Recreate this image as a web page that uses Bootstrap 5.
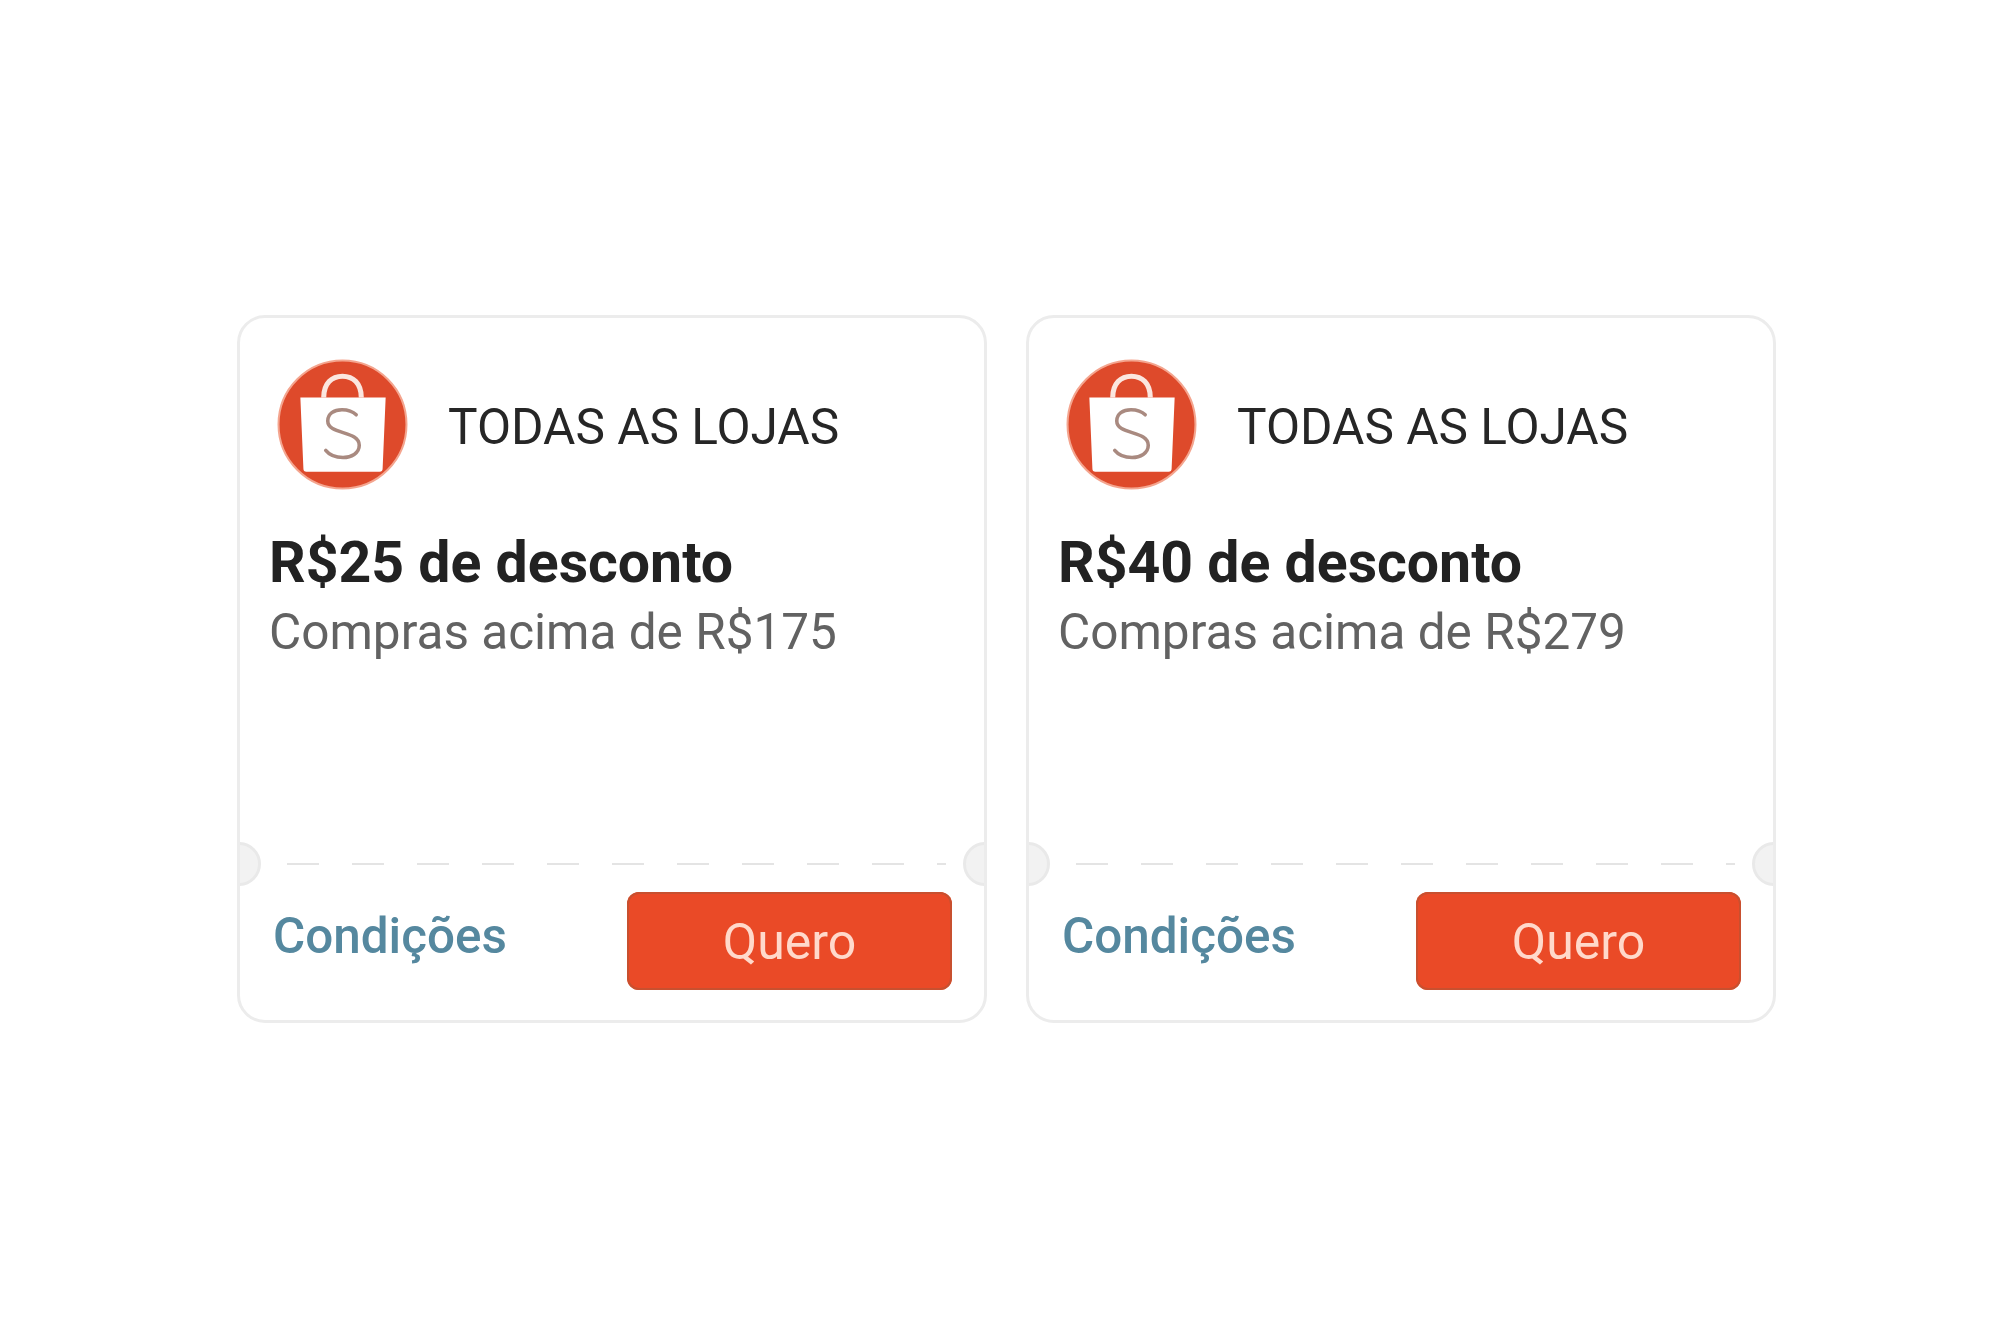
<!DOCTYPE html>
<html lang="pt-BR">
<head>
<meta charset="utf-8">
<title>Cupons</title>
<link href="https://cdn.jsdelivr.net/npm/bootstrap@5.3.0/dist/css/bootstrap.min.css" rel="stylesheet">
<style>
html,body{background:#fff;}
body{font-family:Roboto,"Liberation Sans",sans-serif;width:2000px;height:1324px;overflow:hidden;}
.stage{padding:315px 0 0 237px;gap:39px;}
.coupon{position:relative;width:750px;height:708px;background:#fff;border:3px solid #ececec;border-radius:28px;--bs-card-border-color:#ececec;overflow:hidden;}
.coupon-top{padding:41px 0 0 29px;height:545px;flex:none;}
.store{gap:40px;padding-left:8px;height:131px;}
.store-logo{width:131px;height:131px;flex:none;display:block;filter:blur(.6px);}
.store-name{font-size:49.600px;line-height:1;color:#262626;font-weight:400;margin-top:7px;}
.deal{font-size:57.200px;font-weight:700;color:#222;line-height:64px;margin:41px 0 0;}
.minbuy{font-size:49.500px;color:#626262;line-height:60px;margin:7px 0 0;}
.tear{height:2px;margin:0 38px 0 47px;background:repeating-linear-gradient(90deg,#e4e4e4 0 32px,transparent 32px 65px);}
.notch{position:absolute;width:44px;height:44px;border-radius:50%;background:#f2f2f2;border:3px solid #e9e9e9;top:524px;}
.notch-l{left:-23px;}
.notch-r{right:-23px;}
.coupon-foot{padding:27px 32px 0 33px;}
.terms{font-size:49.400px;font-weight:500;color:#55889f;text-decoration:none;line-height:60px;margin-top:-10px;}
.want{width:325px;height:98px;background:#ea4a27;border:0;border-radius:12px;box-shadow:inset 0 0 0 2px #c8502f;color:#ffd9cb;font-size:50px;line-height:1;padding:2px 0 0;}
.want:hover{background:#ea4a27;color:#ffd9cb;}
</style>
</head>
<body>
<svg width="0" height="0" class="d-block" aria-hidden="true"><defs>
<symbol id="shop" viewBox="0 0 129 129">
<circle cx="64.5" cy="64.5" r="63" fill="#de4a2b" stroke="#f4a58f" stroke-width="2"/>
<path d="M46 38C46 24 54 17 64.500 17S83 24 83 38" fill="none" stroke="#fbe6df" stroke-width="5"/>
<path d="M23 38H107L104 108Q104 111 101 111H29Q26 111 26 108Z" fill="#fff"/>
<path d="M78 55C74 51 69 50 64 50C56 50 50 54 50 61C50 75 81 70 81 85C81 93 73 97 65 97C58 97 52 95 48 90" fill="none" stroke="#a98a80" stroke-width="3.500" stroke-linecap="round"/>
</symbol></defs></svg>
<main class="stage d-flex">
  <div class="card coupon">
    <div class="coupon-top">
      <div class="store d-flex align-items-center">
        <svg class="store-logo"><use href="#shop"/></svg>
        <span class="store-name">TODAS AS LOJAS</span>
      </div>
      <p class="deal">R$25 de desconto</p>
      <p class="minbuy">Compras acima de R$175</p>
    </div>
    <div class="tear"></div>
    <span class="notch notch-l"></span><span class="notch notch-r"></span>
    <div class="coupon-foot d-flex justify-content-between align-items-center">
      <a class="terms" href="#">Condições</a>
      <button class="btn want" type="button">Quero</button>
    </div>
  </div>
  <div class="card coupon">
    <div class="coupon-top">
      <div class="store d-flex align-items-center">
        <svg class="store-logo"><use href="#shop"/></svg>
        <span class="store-name">TODAS AS LOJAS</span>
      </div>
      <p class="deal">R$40 de desconto</p>
      <p class="minbuy">Compras acima de R$279</p>
    </div>
    <div class="tear"></div>
    <span class="notch notch-l"></span><span class="notch notch-r"></span>
    <div class="coupon-foot d-flex justify-content-between align-items-center">
      <a class="terms" href="#">Condições</a>
      <button class="btn want" type="button">Quero</button>
    </div>
  </div>
</main>
<script src="https://cdn.jsdelivr.net/npm/bootstrap@5.3.0/dist/js/bootstrap.bundle.min.js"></script>
</body>
</html>
